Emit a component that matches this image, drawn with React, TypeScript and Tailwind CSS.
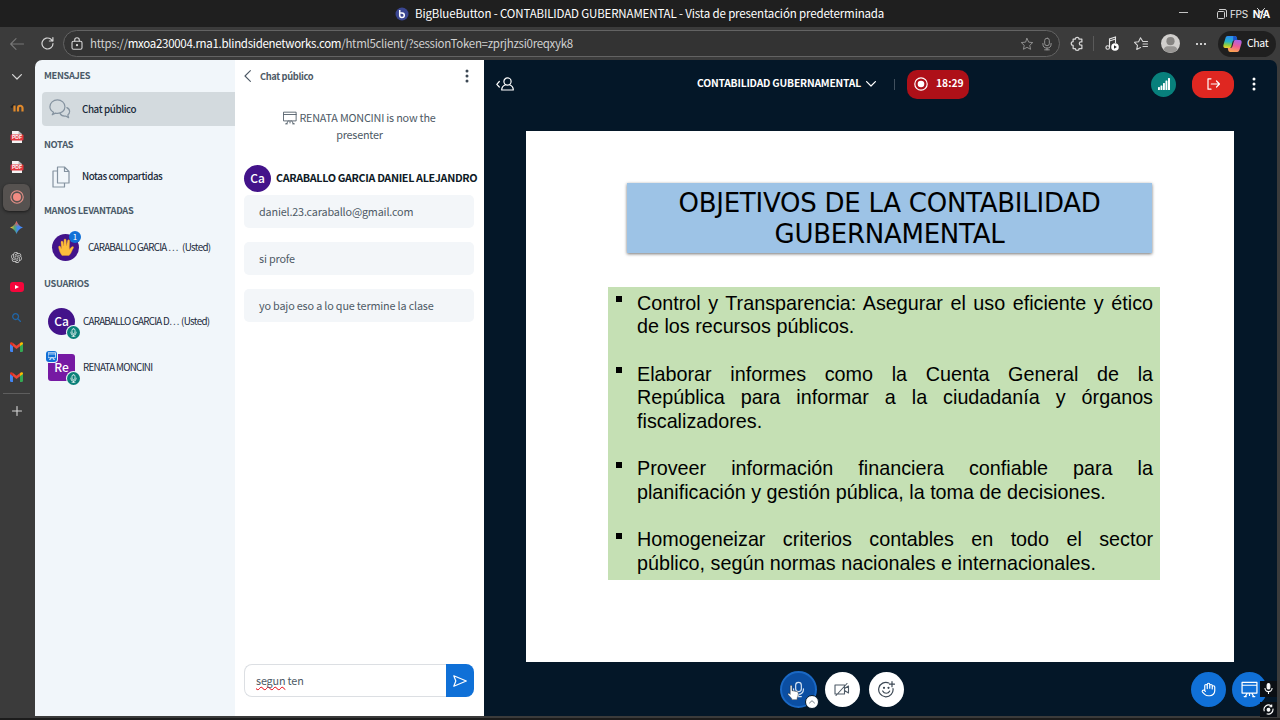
import type { ReactNode } from "react";
import { RiOpenaiFill } from "react-icons/ri";

const objectives = [
  "Control y Transparencia: Asegurar el uso eficiente y ético de los recursos públicos.",
  "Elaborar informes como la Cuenta General de la República para informar a la ciudadanía y órganos fiscalizadores.",
  "Proveer información financiera confiable para la planificación y gestión pública, la toma de decisiones.",
  "Homogeneizar criterios contables en todo el sector público, según normas nacionales e internacionales.",
];

const messages = [
  "daniel.23.caraballo@gmail.com",
  "si profe",
  "yo bajo eso a lo que termine la clase",
];

interface IconProps {
  className?: string;
  box?: string;
  width?: number;
  children: ReactNode;
}

// stroke icon shared by the browser chrome and the client
function Icon({ className = "", box = "0 0 24 24", width = 1.5, children }: IconProps) {
  return (
    <svg
      viewBox={box}
      className={`shrink-0 ${className}`}
      fill="none"
      stroke="currentColor"
      strokeWidth={width}
      strokeLinecap="round"
      strokeLinejoin="round"
    >
      {children}
    </svg>
  );
}

function Dots({ className = "" }: { className?: string }) {
  return (
    <svg viewBox="0 0 4 14" className={`shrink-0 h-[14px] w-1 ${className}`} fill="currentColor">
      <circle cx="2" cy="2" r="1.5" />
      <circle cx="2" cy="7" r="1.5" />
      <circle cx="2" cy="12" r="1.5" />
    </svg>
  );
}

function MicIcon({ className = "", width = 1.6 }: { className?: string; width?: number }) {
  return (
    <Icon className={className} width={width}>
      <rect x="8" y="2" width="8" height="13" rx="4" />
      <path d="M5 11v1a7 7 0 0 0 14 0v-1M12 19v3M8 22h8" />
    </Icon>
  );
}

function BoardIcon({ className = "", width = 1.5 }: { className?: string; width?: number }) {
  return (
    <Icon className={className} width={width}>
      <path d="M1.500 2h21v15h-21zM1.500 6h21M9 17l-3 5M15 17l3 5M12 17v3.500M4.500 22h3M16.500 22h3" />
    </Icon>
  );
}

function StarIcon({ className = "" }: { className?: string }) {
  return (
    <Icon className={className}>
      <path d="M12 2.5l2.9 6.3 6.9.8-5.1 4.7 1.4 6.8-6.1-3.4-6.1 3.4 1.4-6.8L2.2 9.6l6.9-.8z" />
    </Icon>
  );
}

function PdfIcon() {
  return (
    <svg viewBox="0 0 14 14" className="size-[14px]">
      <path d="M2 1h6.5L12 4.2V13H2z" fill="#f4f4f4" />
      <path d="M8.5 1L12 4.2H8.5z" fill="#b9b9b9" />
      <rect x="0.5" y="4.5" width="13" height="6" rx="1" fill="#e2343d" />
      <text x="7" y="9.3" textAnchor="middle" fontSize="5" fontWeight="700" fill="#fff" fontFamily="Liberation Sans, sans-serif">PDF</text>
    </svg>
  );
}

function GmailIcon() {
  return (
    <svg viewBox="0 0 24 18" className="h-[10px] w-[13px]">
      <path d="M0 2.5V16.4c0 .9.7 1.6 1.6 1.6h3.9V7.6z" fill="#4285f4" />
      <path d="M24 2.5V16.4c0 .9-.7 1.6-1.6 1.6h-3.9V7.6z" fill="#34a853" />
      <path d="M18.5 1.6v6L24 3.5V2.4C24 .4 21.7-.7 20.1.5z" fill="#fbbc04" />
      <path d="M5.5 1.6v6L12 12.5l6.500-4.900v-6L12 6.500z" fill="#ea4335" />
      <path d="M0 2.4v1.100l5.500 4.100v-6L3.900.5C2.300-.7 0 .4 0 2.400z" fill="#d93025" />
    </svg>
  );
}

function GeminiIcon() {
  return (
    <svg viewBox="0 0 24 24" className="size-[13px]">
      <defs>
        <linearGradient id="gem" x1="0" y1="0" x2="1" y2="0">
          <stop offset="0.1" stopColor="#e8b73a" />
          <stop offset="0.35" stopColor="#4fa872" />
          <stop offset="0.6" stopColor="#4387f0" />
          <stop offset="1" stopColor="#3f8cff" />
        </linearGradient>
        <linearGradient id="gemTop" x1="0" y1="0" x2="0" y2="1">
          <stop offset="0.1" stopColor="#ef5a4c" />
          <stop offset="0.45" stopColor="#ef5a4c" stopOpacity="0" />
        </linearGradient>
      </defs>
      <path d="M12 0c2.200 6.500 5.500 9.800 12 12-6.500 2.200-9.800 5.500-12 12-2.200-6.500-5.500-9.800-12-12 6.500-2.200 9.800-5.500 12-12z" fill="url(#gem)" />
      <path d="M12 0c2.200 6.500 5.500 9.800 12 12-6.500 2.200-9.800 5.500-12 12-2.200-6.500-5.500-9.800-12-12 6.500-2.200 9.800-5.500 12-12z" fill="url(#gemTop)" />
    </svg>
  );
}

function CopilotIcon() {
  return (
    <svg viewBox="0 0 24 22" className="h-[18px] w-[19px] shrink-0">
      <defs>
        <linearGradient id="cpA" x1="0.3" y1="0" x2="0.2" y2="1">
          <stop offset="0" stopColor="#2b8df0" />
          <stop offset="0.45" stopColor="#25b3c8" />
          <stop offset="0.75" stopColor="#8fce3c" />
          <stop offset="1" stopColor="#f4cf32" />
        </linearGradient>
        <linearGradient id="cpB" x1="0.7" y1="0" x2="0.4" y2="1">
          <stop offset="0" stopColor="#a764e8" />
          <stop offset="0.5" stopColor="#ee5d96" />
          <stop offset="1" stopColor="#fba44f" />
        </linearGradient>
      </defs>
      <path d="M6 1h9c1.5 0 2 1 2.5 2.5L18 6h-3c-2 0-2.600 1-3 2.500L10.500 14c-.5 1.700-1.500 2-3 2H3c-2.500 0-3-2-2.300-4.500L3 4c.6-2 1.400-3 3-3z" fill="url(#cpA)" />
      <path d="M13 1h2c1.500 0 2 1 2.500 2.500L18 6h-3c-1 0-1.800.4-2.300 1z" fill="#1c55c9" />
      <path d="M18 21H9c-1.500 0-2-1-2.500-2.500L6 16h3c2 0 2.600-1 3-2.500L13.500 8c.5-1.700 1.500-2 3-2H21c2.500 0 3 2 2.300 4.500L21 18c-.6 2-1.400 3-3 3z" fill="url(#cpB)" />
    </svg>
  );
}

function TitleBar() {
  return (
    <header className="flex h-[27px] shrink-0 items-center bg-[#1f1f1f] pl-[395px] text-white">
      <svg viewBox="0 0 14 14" className="size-[14px] shrink-0">
        <circle cx="7" cy="7" r="6.5" fill="#3a4690" />
        <path d="M4.700 3v5.200a2.300 2.300 0 1 0 2.300-2.300H5.500" fill="none" stroke="#fff" strokeWidth="1.5" />
      </svg>
      <span className="-mt-[2px] ml-[6px] w-[760px] whitespace-nowrap font-['Noto_Sans_CJK_SC','Noto_Sans',sans-serif] text-[11.5px] leading-[16px] tracking-[-0.14px]">
        BigBlueButton - CONTABILIDAD GUBERNAMENTAL - Vista de presentación predeterminada
      </span>
      <span className="-mt-[2px] ml-[4px] h-px w-[9px] shrink-0 bg-[#c4c4c4]" />
      <Icon className="ml-[29px] size-[10px] text-[#cfcfcf]" box="0 0 10 10" width={1}>
        <rect x="0.5" y="2.5" width="7" height="7" rx="1" />
        <path d="M2.500 .5h5.500a1.500 1.500 0 0 1 1.500 1.500v5.500" />
      </Icon>
      <span className="ml-[3px] font-['Inter',sans-serif] text-[10px] leading-3 tracking-[-0.3px] text-[#e6e6e6]">FPS</span>
      <span className="relative ml-[5px] font-['Inter',sans-serif] text-[10px] font-bold leading-3 tracking-[-0.7px]">
        N/A
        <Icon className="absolute left-[4px] top-[0px] size-[8px] text-[#cfcfcf]" box="0 0 8 8" width={1}>
          <path d="M0 0l8 8M8 0L0 8" />
        </Icon>
      </span>
    </header>
  );
}

function Toolbar() {
  return (
    <div className="flex h-[33px] shrink-0 items-center bg-[#3b3b3b] text-[#d6d6d6]">
      <div className="flex w-[34px] justify-center">
        <Icon className="h-[12px] w-[14px] text-[#777]" box="0 0 14 12" width={1.1}>
          <path d="M13.500 6H.7M6 .7L.7 6 6 11.300" />
        </Icon>
      </div>
      <div className="flex w-[29px] justify-center pr-[3px]">
        <Icon className="size-[13px]" box="0 0 13 13" width={1.2}>
          <path d="M12 6.500A5.500 5.500 0 1 1 9.800 2.100L11.700 4M11.900.6V4H8.400" />
        </Icon>
      </div>
      <div className="flex h-[27px] w-[997px] items-center rounded-full border border-[#636363] bg-[#333] pl-[7px]">
        <Icon className="h-[13px] w-[12px]" box="0 0 12 13" width={1.1}>
          <rect x="1" y="4.2" width="10" height="8" rx="1.5" />
          <path d="M3.700 4V3a2.300 2.300 0 0 1 4.600 0v1" />
          <circle cx="6" cy="8.2" r=".6" fill="currentColor" />
        </Icon>
        <span className="-mt-[2px] ml-[7px] flex-1 whitespace-nowrap font-['Noto_Sans_CJK_SC','Noto_Sans',sans-serif] text-[11.5px] leading-[16px] tracking-[-0.295px] text-[#d0d0d0]">
          https://<span className="text-white">mxoa230004.rna1.blindsidenetworks.com</span>/html5client/?sessionToken=zprjhzsi0reqxyk8
        </span>
        <StarIcon className="size-[14px] text-[#9a9a9a]" />
        <MicIcon className="ml-[6px] mr-[5px] size-[14px] text-[#9a9a9a]" />
      </div>
      <div className="flex w-[33px] justify-center pl-[2px]">
        <Icon className="size-[15px]" width={2}>
          <path d="M5 5h3.500a3 3 0 0 1 6 0H19v4.500h-1.500a2.600 2.600 0 0 0 0 5.200H19V20h-4.500a3 3 0 0 1-6 0H5v-5a3 3 0 0 1 0-6z" />
        </Icon>
      </div>
      <span className="h-[15px] w-px bg-[#5a5a5a]" />
      <div className="flex w-[34px] justify-center pl-[2px]">
        <svg viewBox="0 0 14 15" className="h-[15px] w-[14px]" fill="none" stroke="#e6e6e6" strokeWidth="1.1">
          <path d="M4.500 11V3l6-2v6M4.500 5l6-2" />
          <circle cx="2.7" cy="11.5" r="1.8" />
          <circle cx="10" cy="11" r="3.8" fill="#fff" stroke="none" />
          <path d="M9 9.200l2.800 1.800L9 12.800z" fill="#222" stroke="none" />
        </svg>
      </div>
      <div className="flex w-[25px] justify-center">
        <Icon className="size-[14px]" box="0 0 14 14" width={1.1}>
          <path d="M8.700 4.300L6.500.8 4.600 4.700.5 5.300l3 3-.8 4.200 3.800-1.900M9 7h4.500M8.800 4.500h4.700M9 9.500h4.500" />
        </Icon>
      </div>
      <div className="flex w-[34px] justify-center">
        <svg viewBox="0 0 20 20" className="size-[19px]">
          <circle cx="10" cy="10" r="10" fill="#d1cfcd" />
          <circle cx="10" cy="7.5" r="4.3" fill="#868482" />
          <path d="M3 17c0-2.800 2-4 4-4h6c2 0 4 1.200 4 4a10 10 0 0 1-14 0z" fill="#979593" />
        </svg>
      </div>
      <div className="flex w-[28px] justify-center gap-[2px]">
        <span className="size-[2px] rounded-full bg-white" />
        <span className="size-[2px] rounded-full bg-white" />
        <span className="size-[2px] rounded-full bg-white" />
      </div>
      <div className="ml-[3px] flex h-[26px] w-[58px] items-center rounded-full bg-[#1f1f1f] pl-[5px]">
        <CopilotIcon />
        <span className="-mt-[2px] ml-[5px] font-['Noto_Sans_CJK_SC','Noto_Sans',sans-serif] text-[10.5px] leading-4 tracking-[-0.4px] text-white">Chat</span>
      </div>
    </div>
  );
}

function TabStrip() {
  const tabs: ReactNode[] = [
    <Icon className="h-[6px] w-[10px] text-[#d6d6d6]" box="0 0 10 6" width={1.2}>
      <path d="M.6.6L5 5 9.400.6" />
    </Icon>,
    <svg viewBox="0 0 14 9" className="h-[9px] w-[14px]" fill="none">
      <path d="M1 4.500L4.500 1.500" stroke="#222" strokeWidth="2" />
      <path d="M4.500 8.500V2.500M8 8.500V5a2.200 2.200 0 0 1 4.500 0v3.500" stroke="#e28a2b" strokeWidth="2.2" />
    </svg>,
    <PdfIcon />,
    <PdfIcon />,
    <div className="flex size-[27px] items-center justify-center rounded-[6px] bg-[#565250] shadow-[0_1px_3px_#1a1a1a]">
      <svg viewBox="0 0 14 14" className="size-[14px]">
        <circle cx="7" cy="7" r="6.2" fill="none" stroke="#e59087" strokeWidth="1.1" />
        <circle cx="7" cy="7" r="4" fill="#f28b82" />
      </svg>
    </div>,
    <GeminiIcon />,
    <RiOpenaiFill className="size-[13px] text-[#cfcfcf]" />,
    <span className="flex h-[10px] w-[14px] items-center justify-center rounded-[3px] bg-[#f5063b]">
      <svg viewBox="0 0 4 4" className="size-[4px]"><path d="M0 0l4 2-4 2z" fill="#fff" /></svg>
    </span>,
    <Icon className="size-[9px] text-[#2065a6]" box="0 0 9 9" width={1.3}>
      <circle cx="3.6" cy="3.6" r="2.9" />
      <path d="M5.800 5.800l2.700 2.700" />
    </Icon>,
    <GmailIcon />,
    <GmailIcon />,
  ];

  return (
    <nav className="flex w-[35px] shrink-0 flex-col items-center bg-[#3b3b3b] pr-[2px] pt-[2px]">
      {tabs.map((tab, i) => (
        <div key={i} className="flex h-[30px] shrink-0 items-center justify-center">{tab}</div>
      ))}
      <span className="mt-[1px] h-px w-[27px] shrink-0 bg-[#5e5e5e]" />
      <Icon className="mt-[12px] size-[10px] text-[#d6d6d6]" box="0 0 10 10" width={1.1}>
        <path d="M5 .5v9M.5 5h9" />
      </Icon>
    </nav>
  );
}

function ListHeading({ className, children }: { className: string; children: ReactNode }) {
  return (
    <h2 className={`flex shrink-0 items-center whitespace-nowrap pl-[9px] text-[9.3px] font-bold leading-4 tracking-[-0.36px] text-[#4a5a68] ${className}`}>
      {children}
    </h2>
  );
}

function MicBadge() {
  return (
    <span className="absolute -bottom-[4px] -right-[5px] flex size-[13px] items-center justify-center rounded-full bg-[#0a8078] text-white ring-1 ring-[#f1f6fa]">
      <MicIcon className="size-[9px]" width={2} />
    </span>
  );
}

function UserList() {
  return (
    <aside className="flex w-[200px] shrink-0 flex-col bg-[#f1f6fa] text-[9.8px] font-medium text-[#1b2a3a]">
      <ListHeading className="h-[30px]">MENSAJES</ListHeading>
      <div className="ml-[7px] mt-[2px] flex h-[34px] shrink-0 items-center rounded-l-[4px] bg-[#d3dade] pl-[7px]">
        <Icon className="size-[22px] text-[#8593a0]" width={1.3}>
          <path d="M5 15.500c-2.400-1.300-4-3.500-4-6C1 5.400 4.700 2 9.200 2s8.200 3.400 8.200 7.500-3.700 7.300-8.200 7.300c-.8 0-1.500-.1-2.200-.3L3.500 18.300z" />
          <path d="M19.500 10.500c1.900.9 3 2.400 3 4.200 0 1.500-.8 2.800-2 3.700l.9 3-3.200-1.700c-3 .3-5.400-.9-6.200-3" />
        </Icon>
        <span className="ml-[11px] leading-4 tracking-[-0.4px]">Chat público</span>
      </div>
      <ListHeading className="h-[36px]">NOTAS</ListHeading>
      <div className="flex h-[29px] shrink-0 items-center pl-[17px]">
        <Icon className="h-[22px] w-[18px] text-[#8593a0]" box="0 0 18 22" width={1.2}>
          <path d="M5.500 1h7l4.500 4.500V17H5.500zM12.500 1v4.500H17M5.500 5H1v16h11.500v-4" />
        </Icon>
        <span className="-mt-[1px] ml-[12px] leading-4 tracking-[-0.46px]">Notas compartidas</span>
      </div>
      <ListHeading className="h-[38px]">MANOS LEVANTADAS</ListHeading>
      <div className="mt-[1px] flex h-[34px] shrink-0 items-center pl-[17px] text-[9.8px] font-normal">
        <span className="relative flex size-[27px] shrink-0 items-center justify-center rounded-full bg-[#43138a]">
          <svg viewBox="0 0 16 18" className="h-[18px] w-[16px]" fill="#fdbf3c" stroke="#e69a2a" strokeWidth="0.4">
            <path d="M4 17.500C2 15 1 12 .6 9.300c-.2-1.400 1.500-1.800 2-.5l.8 2L3 4.300c-.1-1.500 1.700-1.700 2-.3l.7 4L6 2c0-1.500 2-1.500 2.100 0l.4 5.800L9.600 2.600c.3-1.400 2.100-1.100 2 .3L11.300 9l.3 2.500c.8-1.300 1.700-2.600 3-2.900 1-.2 1.300.7.8 1.400-1.400 2-2 5.500-4.400 7.500z" />
          </svg>
          <span className="absolute -right-[2px] -top-[3px] flex size-[12px] items-center justify-center rounded-full bg-[#1070d7] text-[8px] leading-none text-white">1</span>
        </span>
        <span className="ml-[9px] w-[94px] whitespace-nowrap leading-4 tracking-[-0.75px]">CARABALLO GARCIA …</span>
        <span className="leading-4 tracking-[-0.65px]">(Usted)</span>
      </div>
      <ListHeading className="h-[38px]">USUARIOS</ListHeading>
      <div className="mt-[2px] flex h-[34px] shrink-0 items-center pl-[13px] text-[9.8px] font-normal">
        <span className="relative flex size-[27px] shrink-0 items-center justify-center rounded-full bg-[#43138a] text-[12px] font-medium leading-4 text-white">
          Ca
          <MicBadge />
        </span>
        <span className="ml-[8px] w-[98px] whitespace-nowrap leading-4 tracking-[-0.75px]">CARABALLO GARCIA D…</span>
        <span className="leading-4 tracking-[-0.65px]">(Usted)</span>
      </div>
      <div className="mt-[12px] flex h-[34px] shrink-0 items-center pl-[13px] text-[9.8px] font-normal">
        <span className="relative flex size-[27px] shrink-0 items-center justify-center rounded-[3px] bg-[#7619a3] text-[12px] font-medium leading-4 text-white">
          Re
          <span className="absolute -left-[2px] -top-[3px] flex size-[11px] items-center justify-center rounded-[3px] bg-[#1070d7] ring-1 ring-[#f1f6fa]">
            <BoardIcon className="size-[8px]" width={2} />
          </span>
          <MicBadge />
        </span>
        <span className="ml-[8px] whitespace-nowrap leading-4 tracking-[-0.72px]">RENATA MONCINI</span>
      </div>
    </aside>
  );
}

function ChatPanel() {
  return (
    <section className="flex w-[249px] shrink-0 flex-col bg-white px-[9px] text-[10.8px] tracking-[-0.16px] text-[#4e5a66]">
      <div className="flex h-[32px] shrink-0 items-center">
        <Icon className="h-[12px] w-[7px]" box="0 0 7 12" width={1.1}>
          <path d="M6.400.6L1 6l5.400 5.400" />
        </Icon>
        <span className="ml-[9px] flex-1 text-[9.3px] font-bold leading-4 tracking-[-0.36px]">Chat público</span>
        <Dots className="mr-[6px] text-[#3c4854]" />
      </div>
      <div className="mt-[17px] flex h-[35px] shrink-0 flex-col items-center leading-[17px] tracking-[-0.2px]">
        <p className="flex items-center gap-[2px] whitespace-nowrap">
          <BoardIcon className="size-[14px]" />
          RENATA MONCINI is now the
        </p>
        <p>presenter</p>
      </div>
      <div className="mt-[21px] flex h-[27px] shrink-0 items-center">
        <span className="flex size-[27px] shrink-0 items-center justify-center rounded-full bg-[#43138a] pb-[1px] text-[12px] font-medium leading-4 tracking-normal text-white">Ca</span>
        <span className="-mt-[3px] ml-[5px] whitespace-nowrap font-bold leading-4 tracking-[-0.36px] text-[#0e1a26]">
          CARABALLO GARCIA DANIEL ALEJANDRO
        </span>
      </div>
      <div className="mt-[3px] flex w-[230px] flex-1 flex-col gap-[14px]">
        {messages.map((m) => (
          <p key={m} className="flex h-[33px] items-center whitespace-nowrap rounded-[5px] bg-[#f3f6f9] pb-[2px] pl-[15px] leading-4">{m}</p>
        ))}
      </div>
      <div className="mb-[19px] flex h-[33px] w-[230px] shrink-0">
        <div className="flex flex-1 items-center rounded-l-[8px] border border-r-0 border-[#dcdfe3] pb-[2px] pl-[11px] leading-4">
          <span className="underline decoration-red-600 decoration-wavy decoration-[1px] underline-offset-[1px] [text-decoration-skip-ink:none]">segun</span>&nbsp;ten
        </div>
        <button className="flex w-[28px] items-center justify-center rounded-r-[8px] bg-[#0f70d7] text-white">
          <Icon className="h-[12px] w-[14px]" box="0 0 14 12" width={1.2}>
            <path d="M.8.8L13.300 6 .8 11.200 2.800 6z" />
          </Icon>
        </button>
      </div>
    </section>
  );
}

function Slide() {
  return (
    <div className="ml-[42px] flex h-[531px] w-[708px] shrink-0 flex-col bg-white text-black">
      <h1 className="ml-[101px] mt-[52px] flex h-[70px] w-[525px] shrink-0 items-center justify-center bg-[#9dc3e6] pt-[2px] text-center font-['DejaVu_Sans',sans-serif] text-[26px] leading-[31px] tracking-[-0.25px] shadow-[0_1px_3px_rgba(0,0,0,0.55)]">
        OBJETIVOS DE LA CONTABILIDAD<br />GUBERNAMENTAL
      </h1>
      <ul className="ml-[82px] mt-[34px] flex h-[293px] w-[552px] shrink-0 flex-col gap-[23.7px] bg-[#c5e0b4] pl-[29px] pr-[7px] pt-[4.5px] text-justify font-['Liberation_Sans',sans-serif] text-[19.75px] leading-[23.67px]">
        {objectives.map((text) => (
          <li key={text} className="relative">
            <span className="absolute -left-[21px] top-[4.5px] size-[6px] bg-black" />
            {text}
          </li>
        ))}
      </ul>
    </div>
  );
}

function Stage() {
  return (
    <main className="flex w-[793px] shrink-0 flex-col bg-[#041728] text-white">
      <div className="flex h-[48px] shrink-0 items-center pl-[12px]">
        <Icon className="-mt-[1px] h-[14px] w-[18px]" box="0 0 18 14" width={1.2}>
          <path d="M3.300 4.500L.8 7.300l2.500 2.700" />
          <circle cx="11.500" cy="4.500" r="3.600" />
          <path d="M9.500 7.800C7 8.800 5.700 10 5.700 13h11.600c0-3-1.300-4.200-3.800-5.200" />
        </Icon>
        <span className="-mt-[2px] ml-[183px] w-[164px] whitespace-nowrap text-[10.3px] font-bold leading-4 tracking-[-0.19px]">CONTABILIDAD GUBERNAMENTAL</span>
        <Icon className="ml-[5px] h-[6px] w-[10px]" box="0 0 10 6" width={1.2}>
          <path d="M.6.6L5 5 9.400.6" />
        </Icon>
        <span className="ml-[18px] h-[11px] w-px bg-[#41505e]" />
        <div className="ml-[12px] flex h-[29px] w-[62px] items-center rounded-[10px] bg-[#ae1018] pl-[7px]">
          <svg viewBox="0 0 14 14" className="-mt-[1px] size-[14px] shrink-0">
            <circle cx="7" cy="7" r="6.2" fill="none" stroke="#fff" strokeWidth="1.2" />
            <circle cx="7" cy="7" r="3.3" fill="#fff" />
          </svg>
          <span className="-mt-[2px] ml-[8px] text-[10.3px] font-bold leading-4">18:29</span>
        </div>
        <span className="ml-[182px] flex size-[25px] items-center justify-center rounded-full bg-[#08807c]">
          <svg viewBox="0 0 12 12" className="size-[12px]" fill="#fff">
            <rect x="0" y="9" width="1.9" height="3" rx=".5" />
            <rect x="2.5" y="7.5" width="1.9" height="4.5" rx=".5" />
            <rect x="5" y="5" width="1.9" height="7" rx=".5" />
            <rect x="7.5" y="2.5" width="1.9" height="9.5" rx=".5" />
            <rect x="10" y="0" width="2" height="12" rx=".5" />
          </svg>
        </span>
        <span className="ml-[16px] flex h-[27px] w-[42px] items-center justify-center rounded-[12px] bg-[#df2721]">
          <Icon className="h-[12px] w-[13px]" box="0 0 13 12" width={1.2}>
            <path d="M4 .8H1v10.400h3M4.300 6h8M9.500 3l3 3-3 3" />
          </Icon>
        </span>
        <Dots className="ml-[18px]" />
      </div>
      <div className="h-[23px] shrink-0" />
      <Slide />
      <div className="flex h-[54px] shrink-0 items-center pl-[296px]">
        <span className="relative flex size-[37px] items-center justify-center rounded-full border-2 border-[#1a68c4] bg-[#0b4ea2]">
          <MicIcon className="size-[17px] text-[#d4e2f3]" width={1.7} />
          <span className="absolute -bottom-[3px] -right-[4px] flex size-[14px] items-center justify-center rounded-full border border-[#041728] bg-white">
            <Icon className="h-[4px] w-[6px] text-[#4e5a66]" box="0 0 6 4" width={0.8}>
              <path d="M.5 3L3 .7 5.500 3" />
            </Icon>
          </span>
          {/* pointer */}
          <svg viewBox="0 0 12 16" className="absolute left-[5px] top-[12px] h-[15px] w-[12px]" fill="#fff" stroke="#222" strokeWidth="0.5">
            <path d="M3 1.200C3-.1 5-.1 5 1.200V6l5.200 1c1 .2 1.500.8 1.500 1.800-.1 2-.5 3.700-1.200 5v2h-6v-1.500L.7 10.200c-.7-1 .5-2 1.400-1.200L3 10z" />
          </svg>
        </span>
        <span className="ml-[7.5px] flex size-[35px] items-center justify-center rounded-full bg-white text-[#4e5a66]">
          <Icon className="h-[13px] w-[16px]" box="0 0 16 13" width={1.1}>
            <path d="M1 2h9.500v9H1zM10.500 5.500L14.500 3v7l-4-2.500M2 12.500L13 .5" />
          </Icon>
        </span>
        <span className="ml-[9px] flex size-[35px] items-center justify-center rounded-full bg-white text-[#3c4854]">
          <Icon className="size-[17px]" box="0 0 17 17" width={1.2}>
            <path d="M10.800 2A7.200 7.200 0 1 0 15 7.500M14 .7v5M11.500 3.200h5M4.700 10c1.500 3 5.600 3 7 0" />
            <circle cx="6" cy="6.8" r=".5" fill="currentColor" />
            <circle cx="10.5" cy="6.8" r=".5" fill="currentColor" />
          </Icon>
        </span>
        <span className="ml-[287.5px] flex size-[35px] items-center justify-center rounded-full bg-[#1070d7]">
          <Icon className="size-[15px]" width={1.9}>
            <path d="M18 11V6a2 2 0 0 0-4 0M14 10V4a2 2 0 0 0-4 0v2M10 10.500V6a2 2 0 0 0-4 0v8M18 8a2 2 0 1 1 4 0v6a8 8 0 0 1-8 8h-2c-2.800 0-4.500-.9-6-2.300l-3.600-3.600a2 2 0 0 1 2.800-2.800L7 15" />
          </Icon>
        </span>
        <span className="relative ml-[6px] flex size-[35px] shrink-0 items-center justify-center rounded-full bg-[#1070d7]">
          <BoardIcon className="size-[17px]" width={1.7} />
          {/* recorder overlay */}
          <span className="absolute left-[28px] top-[9px] flex h-[16px] w-[17px] items-center justify-center bg-[#0b0f14]">
            <svg viewBox="0 0 10 12" className="h-[11px] w-[9px]" fill="none" stroke="#fff" strokeWidth="1.2">
              <rect x="3.5" y=".6" width="3" height="6" rx="1.5" fill="#fff" />
              <path d="M1 5.500a4 4 0 0 0 8 0M5 9.500V12" />
            </svg>
          </span>
          <span className="absolute left-[28px] top-[30px] flex h-[15px] w-[17px] items-center justify-center bg-[#0b0f14]">
            <svg viewBox="0 0 12 12" className="size-[11px]" fill="none" stroke="#fff" strokeWidth="1.2">
              <path d="M1.500 8A5 5 0 0 1 9 2M10.800 5A5 5 0 0 1 4 10.600M9.500.5V3H7" />
              <circle cx="6" cy="6.3" r="1.5" fill="#fff" />
            </svg>
          </span>
        </span>
      </div>
    </main>
  );
}

export default function App() {
  return (
    <div className="flex h-[720px] w-[1280px] flex-col overflow-hidden bg-[#3b3b3b]">
      <TitleBar />
      <Toolbar />
      <div className="flex h-[656px] shrink-0">
        <TabStrip />
        <div className="flex rounded-t-[7px] font-['Noto_Sans_CJK_SC','Noto_Sans',sans-serif] [clip-path:inset(0_0_-4px_0_round_7px_7px_0_0)]">
          <UserList />
          <ChatPanel />
          <Stage />
        </div>
      </div>
      <div className="h-[4px] shrink-0 border-t-2 border-[#3b3b3b] bg-[#1c1c1c]" />
    </div>
  );
}
